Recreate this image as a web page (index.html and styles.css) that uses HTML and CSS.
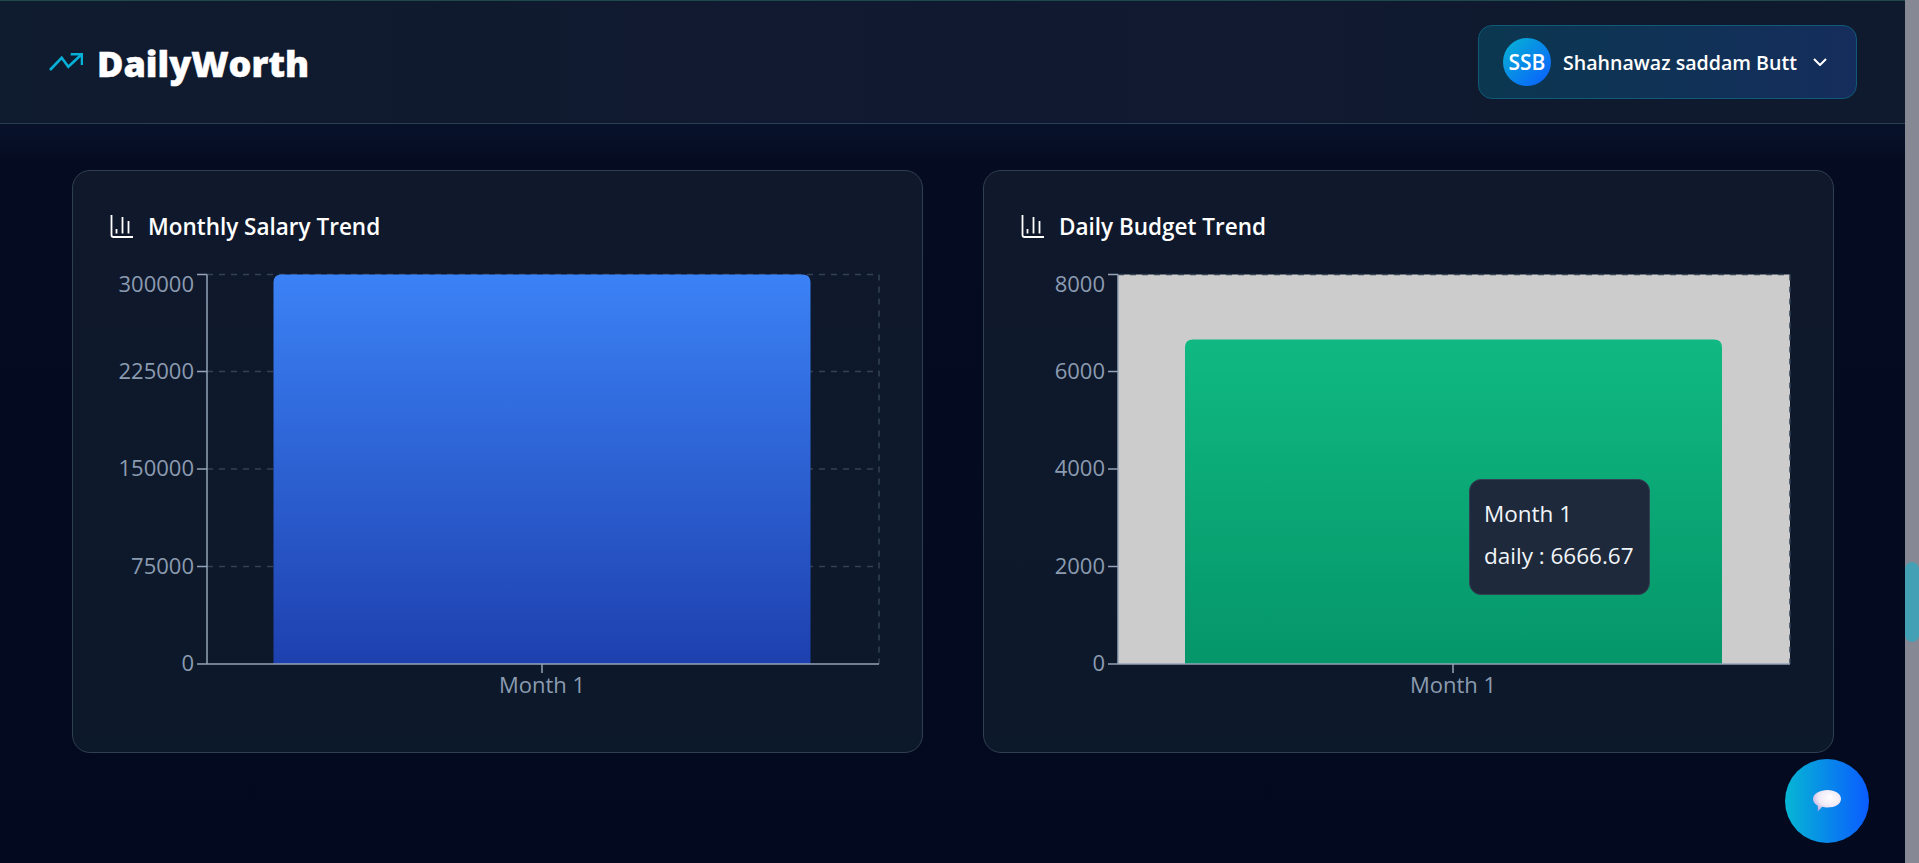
FILE: index.html
```html
<!DOCTYPE html>
<html lang="en">
<head>
  <meta charset="UTF-8">
  <meta name="viewport" content="width=device-width, initial-scale=1.0">
  <title>DailyWorth</title>
  <link rel="stylesheet" href="styles.css">
</head>
<body>

  <div class="page">
    <div class="content">
      <header class="top-bar">
        <div class="brand">
          <svg class="brand-icon" viewBox="0 0 34 18" fill="none">
            <path d="M1 17 L12.7 4.8 L19.3 13.7 L32.5 1.5"/>
            <path d="M21.7 1.2 H33 V12"/>
          </svg>
          <span class="brand-name">DailyWorth</span>
        </div>
        <button class="user-btn">
          <span class="avatar">SSB</span>
          <span class="user-name">Shahnawaz saddam Butt</span>
          <svg class="chevron" viewBox="0 0 14 8" fill="none"><path d="M1 1 L7 7 L13 1"/></svg>
        </button>
      </header>

      <main class="charts">
        <section class="card">
          <h2 class="card-title">
            <svg class="card-icon" viewBox="0 0 24 24" fill="none">
              <path d="M1.5 1 V21 Q1.5 23 3.5 23 H23"/>
              <path d="M6.5 15 V19.5 M12.5 3 V19.5 M18.5 7 V19.5"/>
            </svg>
            Monthly Salary Trend
          </h2>
          <svg class="chart" viewBox="0 0 775 450">
            <defs>
              <linearGradient id="blueBar" x1="0" y1="0" x2="0" y2="1">
                <stop offset="0" stop-color="#3b82f6"/>
                <stop offset="1" stop-color="#1e40af"/>
              </linearGradient>
            </defs>
            <path class="grid" d="M97 12.5 H769 M97 109.5 H769 M97 207 H769 M97 304.5 H769 M769 12.5 V402"/>
            <path d="M163.5 402 V20.5 Q163.5 12.5 171.5 12.5 H692.5 Q700.5 12.5 700.5 20.5 V402 Z" fill="url(#blueBar)"/>
            <path class="axis" d="M87 12.5 H97 M87 109.5 H97 M87 207 H97 M87 304.5 H97 M87 402 H97 M97 12.5 V402 H769 M432 402 V411"/>
            <text class="tick" x="84" y="30" text-anchor="end">300000</text>
            <text class="tick" x="84" y="117" text-anchor="end">225000</text>
            <text class="tick" x="84" y="214" text-anchor="end">150000</text>
            <text class="tick" x="84" y="312" text-anchor="end">75000</text>
            <text class="tick" x="84" y="409" text-anchor="end">0</text>
            <text class="tick" x="432" y="431" text-anchor="middle">Month 1</text>
          </svg>
        </section>

        <section class="card">
          <h2 class="card-title">
            <svg class="card-icon" viewBox="0 0 24 24" fill="none">
              <path d="M1.5 1 V21 Q1.5 23 3.5 23 H23"/>
              <path d="M6.5 15 V19.5 M12.5 3 V19.5 M18.5 7 V19.5"/>
            </svg>
            Daily Budget Trend
          </h2>
          <svg class="chart" viewBox="0 0 775 450">
            <defs>
              <linearGradient id="greenBar" x1="0" y1="0" x2="0" y2="1">
                <stop offset="0" stop-color="#10b981"/>
                <stop offset="1" stop-color="#059669"/>
              </linearGradient>
            </defs>
            <rect x="97" y="12.5" width="672" height="389.5" fill="#cccccc"/>
            <path class="grid" d="M97 12.5 H769 M769 12.5 V402"/>
            <path d="M164 402 V85.5 Q164 77.5 172 77.5 H693 Q701 77.5 701 85.5 V402 Z" fill="url(#greenBar)"/>
            <path class="axis" d="M87 12.5 H97 M87 109.5 H97 M87 207 H97 M87 304.5 H97 M87 402 H97 M97 12.5 V402 H769 M432 402 V411"/>
            <text class="tick" x="84" y="30" text-anchor="end">8000</text>
            <text class="tick" x="84" y="117" text-anchor="end">6000</text>
            <text class="tick" x="84" y="214" text-anchor="end">4000</text>
            <text class="tick" x="84" y="312" text-anchor="end">2000</text>
            <text class="tick" x="84" y="409" text-anchor="end">0</text>
            <text class="tick" x="432" y="431" text-anchor="middle">Month 1</text>
          </svg>
          <div class="tooltip">
            <p>Month 1</p>
            <p>daily : 6666.67</p>
          </div>
        </section>
      </main>
    </div>

    <div class="scrollbar"><div class="scroll-thumb"></div></div>
  </div>

  <button class="chat-btn">
    <svg class="chat-icon" viewBox="0 0 30 24" width="30" height="24">
      <defs>
        <radialGradient id="bubble" cx="0.6" cy="0.35" r="0.75">
          <stop offset="0" stop-color="#ffffff"/>
          <stop offset="0.55" stop-color="#efe8f5"/>
          <stop offset="1" stop-color="#b39cdc"/>
        </radialGradient>
      </defs>
      <path d="M15.5 1 C23 1 29 4.5 29 10 C29 15 23 18.5 15.5 18.5 C13.5 18.5 11.5 18.3 10 17.8 C8.5 19.8 7 21.5 5.5 22.5 C6 20.5 6 18 5.5 16.5 C2.8 15 1 12.7 1 10 C1 4.5 8 1 15.5 1 Z" fill="url(#bubble)"/>
    </svg>
  </button>

</body>
</html>
```

FILE: styles.css
```css
* {
  box-sizing: border-box;
}
html {
  height: 863px;
  overflow: hidden;
}
body {
  margin: 0;
  height: 863px;
  overflow: hidden;
  background: #030a1f;
  font-family: "Open Sans", "Noto Sans", sans-serif;
  color: white;
}
.page {
  display: flex;
  height: 100%;
}
.content {
  flex: 1;
  min-width: 0;
  background: linear-gradient(180deg, #07122a 124px, #050b20 170px, #030a1f 100%);
}
.top-bar {
  height: 124px;
  display: flex;
  align-items: center;
  justify-content: space-between;
  padding: 0 48px;
  background: linear-gradient(90deg, #0f1b2e, #111930 50%, #0f1a2e);
  border-top: 1px solid #1e4a4c;
  border-bottom: 1px solid #2b3d50;
}
.brand {
  display: flex;
  align-items: center;
  gap: 14px;
  margin-left: 1px;
}
.brand-icon {
  width: 34px;
  height: 18px;
}
.brand-icon path {
  stroke: #06b0d6;
  stroke-width: 2.6;
}
.brand-name {
  font-size: 36px;
  font-weight: 800;
  line-height: 50px;
  margin-top: 4px;
  -webkit-text-stroke: 0.5px white;
}
.user-btn {
  width: 379px;
  height: 74px;
  display: flex;
  align-items: center;
  padding: 0 0 0 24px;
  background: linear-gradient(90deg, #0b3750, #152d5c);
  border: 1px solid #0e5a78;
  border-radius: 14px;
  color: white;
  font-family: inherit;
}
.avatar {
  width: 48px;
  height: 48px;
  display: flex;
  align-items: center;
  justify-content: center;
  border-radius: 50%;
  background: linear-gradient(135deg, #06b6d4, #0a5cff);
  font-size: 21px;
  font-weight: 600;
}
.user-name {
  margin-left: 12px;
  font-size: 19.6px;
  font-weight: 600;
  white-space: nowrap;
}
.chevron {
  width: 14px;
  height: 8px;
  margin-left: 16px;
}
.chevron path {
  stroke: white;
  stroke-width: 2;
}
.charts {
  display: grid;
  grid-template-columns: 1fr 1fr;
  gap: 60px;
  padding: 46px 72px 0;
}
.card {
  position: relative;
  height: 583px;
  padding: 39px 37px 0;
  background: linear-gradient(180deg, #10182c, #0c192a);
  border: 1px solid #2f3f52;
  border-radius: 18px;
}
.card-title {
  display: flex;
  align-items: center;
  gap: 14px;
  height: 32px;
  margin: 0 0 20px;
  font-size: 22.5px;
  font-weight: 600;
}
.card-icon {
  width: 24px;
  height: 24px;
}
.card-icon path {
  stroke: white;
  stroke-width: 1.8;
}
.chart {
  display: block;
  width: 775px;
  height: 450px;
}
.grid {
  fill: none;
  stroke: #334155;
  stroke-width: 1.5;
  stroke-dasharray: 6 6;
}
.axis {
  fill: none;
  stroke: #94a3b8;
  stroke-width: 1.5;
}
.tick {
  fill: #8b9bb0;
  font-size: 22px;
}
.tooltip {
  position: absolute;
  left: 485px;
  top: 308px;
  width: 181px;
  height: 116px;
  padding: 13px 14px;
  background: #1e293b;
  border: 1px solid #334155;
  border-radius: 12px;
  font-size: 22.5px;
  color: #f1f5f9;
}
.tooltip p {
  margin: 0;
  line-height: 42px;
  white-space: nowrap;
}
.scrollbar {
  flex: none;
  width: 14px;
  padding-top: 562px;
  background: #868994;
}
.scroll-thumb {
  height: 80px;
  background: #44a0b5;
  border-radius: 7px;
}
.chat-btn {
  position: fixed;
  left: 1785px;
  top: 759px;
  width: 84px;
  height: 84px;
  display: flex;
  align-items: center;
  justify-content: center;
  padding: 0;
  border: none;
  border-radius: 50%;
  background: linear-gradient(90deg, #06b6d4, #0a5cff);
}
.chat-icon {
  filter: blur(0.4px);
}
```
